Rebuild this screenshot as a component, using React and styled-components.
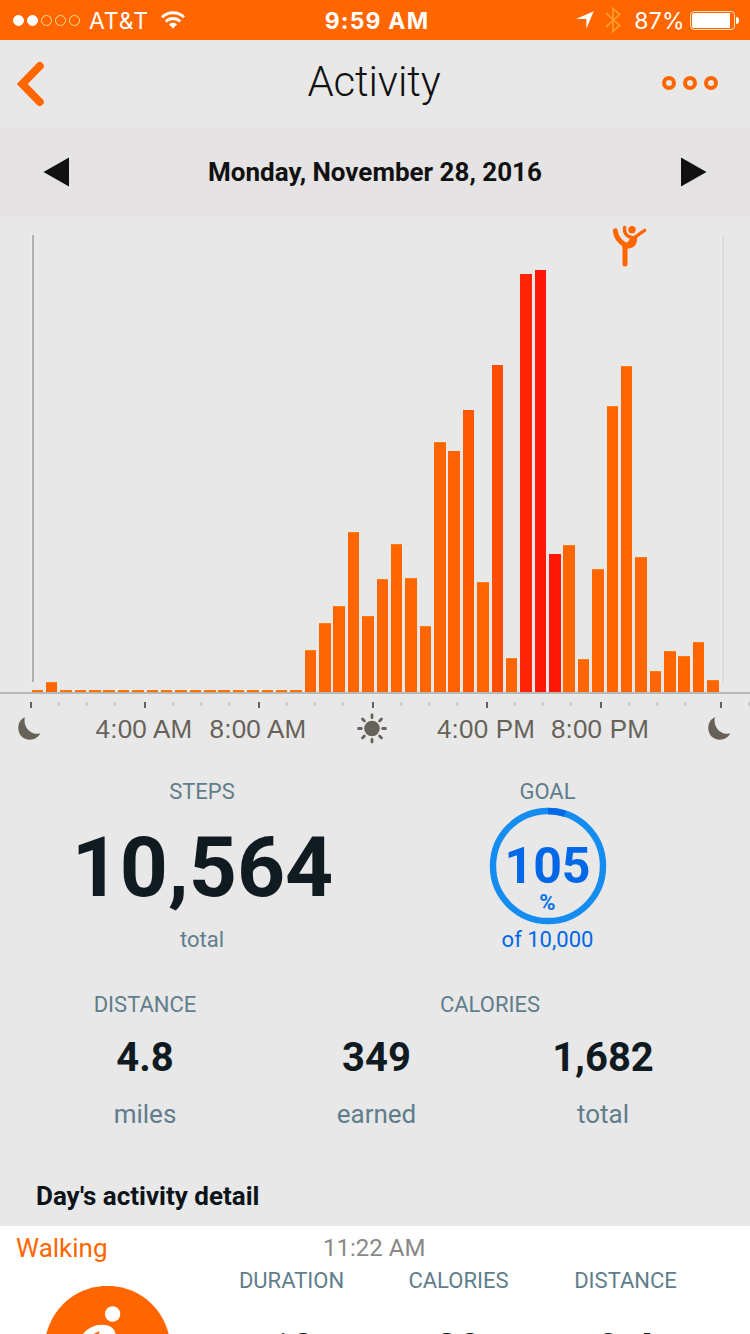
import React from 'react';
import styled, { createGlobalStyle } from 'styled-components';

const orange = '#ff6600';

const bars = [
  2, 10, 2, 2, 2, 2, 2, 2, 2, 2, 2, 2, 2, 2, 2, 2, 2, 2, 2, 42, 69, 86, 160, 76,
  113, 148, 114, 66, 250, 241, 282, 110, 327, 34, 418, 422, 138, 147, 33, 123, 286, 326, 135, 21,
  41, 36, 50, 12,
];

const barColors = {
  29: '#ff6103',
  30: '#ff5900',
  32: '#ff4e00',
  34: '#ff2406',
  35: '#ff1807',
  36: '#ff1807',
};

const tickGroups = [114, 114, 114, 114, 114, 120];

const Moon = () => (
  <svg width="24" height="24" viewBox="0 0 24 24">
    <path d="M6.900.3C2.800 2 .3 6 .3 11 .3 17.800 5.300 22.700 11.800 22.700 16.500 22.700 20.400 20.200 22.300 16.300 18.900 17.300 15.300 16.900 12 14.500 7.700 11.400 5.700 6 6.900.3Z" fill="#666259" />
  </svg>
);

const Sun = () => (
  <svg width="30" height="32" viewBox="0 0 30 32">
    <circle cx="15" cy="15.500" r="7.800" fill="#666259" />
    <g stroke="#666259" strokeWidth="2.800" strokeLinecap="round">
      <path d="M15 1.900v2.800M15 26.300v2.800M1.500 15.500h2.800M25.700 15.500h2.800M5.500 6l1.900 1.900M22.600 23.100l1.900 1.900M5.500 25l1.900-1.900M22.600 7.900l1.900-1.900" />
    </g>
  </svg>
);

const Dancer = () => (
  <svg width="36" height="44" viewBox="96 28 108 132" fill="none" stroke={orange} strokeLinecap="round">
    <circle cx="156" cy="45" r="11" fill={orange} stroke="none" />
    <path d="M106 48C107 63 117 80 135 91V148" strokeWidth="15" strokeLinejoin="round" />
    <path d="M134 38C131 54 140 67 157 69" strokeWidth="10" />
    <path d="M194 47L164 68" strokeWidth="10" />
    <path d="M126 82C140 88 148 80 150 69L170 62C175 84 166 102 142 102L128 99Z" fill={orange} stroke="none" />
  </svg>
);

export default function App() {
  return (
    <Screen>
      <GlobalStyle />
      <StatusBar>
        <StatusLeft>
          <Signal>
            <SignalDot $on />
            <SignalDot $on />
            <SignalDot />
            <SignalDot />
            <SignalDot />
          </Signal>
          <Carrier>AT&amp;T</Carrier>
          <svg width="24" height="18" viewBox="0 0 24 18" fill="none" stroke="#fff" strokeWidth="2.800">
            <path d="M1 6.300C7.200.2 16.800.2 23 6.300" />
            <path d="M4.800 10.500C8.900 6.500 15.100 6.500 19.200 10.500" />
            <path d="M12 17.500L7.900 13.300C10.200 11.200 13.800 11.200 16.100 13.300Z" fill="#fff" stroke="none" />
          </svg>
        </StatusLeft>
        <Clock>9:59 AM</Clock>
        <StatusRight>
          <svg width="18" height="18" viewBox="0 0 18 18">
            <path d="M17.700.2L10.400 17.800V8H0Z" fill="#fff" />
          </svg>
          <Bluetooth width="16" height="28" viewBox="0 0 16 28">
            <path d="M1 6.800L14.500 19.500 8 25.500V2.500L14.500 8.300 1 21" fill="none" stroke="#ff9a2b" strokeWidth="1.800" />
          </Bluetooth>
          <Percent>87%</Percent>
          <Battery>
            <BatteryBody>
              <BatteryLevel />
            </BatteryBody>
            <BatteryCap />
          </Battery>
        </StatusRight>
      </StatusBar>

      <Header>
        <svg width="28" height="46" viewBox="0 0 28 46">
          <path d="M22.800 5L5.200 23 22.800 41" fill="none" stroke={orange} strokeWidth="7.900" strokeLinecap="round" />
        </svg>
        <Title>Activity</Title>
        <More>
          <MoreDot />
          <MoreDot />
          <MoreDot />
        </More>
      </Header>

      <DateBar>
        <svg width="26" height="30" viewBox="0 0 26 30">
          <path d="M26 .5V29.500L.5 15Z" fill="#111" />
        </svg>
        <DateText>Monday, November 28, 2016</DateText>
        <svg width="26" height="30" viewBox="0 0 26 30">
          <path d="M0 .5V29.500L25.500 15Z" fill="#111" />
        </svg>
      </DateBar>

      <Chart>
        <Bars>
          {bars.map((height, i) => (
            <Bar key={i} $color={barColors[i]} style={{ height }} />
          ))}
        </Bars>
        <MidnightLine $left={30} $color="#b0b0b0" />
        <MidnightLine $left={720} $color="#dcdcdc" />
        <Marker>
          <Dancer />
        </Marker>
      </Chart>

      <Ticks>
        {tickGroups.map((width, i) => (
          <TickGroup key={i} $width={width}>
            <Tick $major />
            <Tick />
            <Tick />
            <Tick />
          </TickGroup>
        ))}
        <TickGroup $width={30}>
          <Tick $major />
          <Tick />
        </TickGroup>
      </Ticks>

      <Hours>
        <Hour $width={60}><Moon /></Hour>
        <Hour $width={168}>4:00 AM</Hour>
        <Hour $width={60}>8:00 AM</Hour>
        <Hour $width={168}><Sun /></Hour>
        <Hour $width={60}>4:00 PM</Hour>
        <Hour $width={168}>8:00 PM</Hour>
        <Hour $width={72}><Moon /></Hour>
      </Hours>

      <Totals>
        <Steps>
          <Label>STEPS</Label>
          <StepCount>10,564</StepCount>
          <Label>total</Label>
        </Steps>
        <Goal>
          <Label>GOAL</Label>
          <Ring>
            <RingArc width="118" height="118" viewBox="-59 -59 118 118" fill="none" strokeWidth="6.400">
              <circle r="55" stroke="#158cf0" />
              <path d="M0-55A55 55 0 0 1 17-52.300" stroke="#0068e6" />
            </RingArc>
            <GoalValue>105</GoalValue>
            <GoalUnit>%</GoalUnit>
          </Ring>
          <Label $blue>of 10,000</Label>
        </Goal>
      </Totals>

      <Summary>
        <Metric $width={290}>
          <Label>DISTANCE</Label>
          <Value>4.8</Value>
          <Unit>miles</Unit>
        </Metric>
        <Calories>
          <Label>CALORIES</Label>
          <CalorieRow>
            <Metric $width={173}>
              <Value>349</Value>
              <Unit>earned</Unit>
            </Metric>
            <Metric $width={280}>
              <Value>1,682</Value>
              <Unit>total</Unit>
            </Metric>
          </CalorieRow>
        </Calories>
      </Summary>

      <DetailTitle>Day's activity detail</DetailTitle>

      <Detail>
        <DetailHead>
          <Kind>Walking</Kind>
          <Time>11:22 AM</Time>
        </DetailHead>
        <DetailBody>
          <svg width="126" height="126" viewBox="0 0 126 126">
            <circle cx="62.500" cy="62.700" r="62.900" fill={orange} />
            <circle cx="67.600" cy="28" r="7.700" fill="#fff" />
            <path d="M36 50C42 43 48 38.800 57 38.800C66 38.800 70 43 71 50L66 80H30Z" fill="#fff" />
            <path d="M44 54L46.500 49L54.500 45L52 54Z" fill={orange} />
          </svg>
          <DetailStats>
            <DetailStat>
              <Label>DURATION</Label>
              <DetailValue>18</DetailValue>
            </DetailStat>
            <DetailStat>
              <Label>CALORIES</Label>
              <DetailValue>38</DetailValue>
            </DetailStat>
            <DetailStat>
              <Label>DISTANCE</Label>
              <DetailValue>0.4</DetailValue>
            </DetailStat>
          </DetailStats>
        </DetailBody>
      </Detail>
    </Screen>
  );
}

const GlobalStyle = createGlobalStyle`
  * {
    box-sizing: border-box;
  }

  body {
    margin: 0;
    background: #e8e8e8;
    overflow: hidden;
  }

  svg {
    display: block;
    flex-shrink: 0;
  }
`;

const Screen = styled.div`
  display: flex;
  flex-direction: column;
  width: 750px;
  height: 1334px;
  overflow: hidden;
  background: #e8e8e8;
  font-family: Roboto, sans-serif;
  white-space: nowrap;

  > * {
    flex-shrink: 0;
  }
`;

const StatusBar = styled.div`
  display: grid;
  grid-template-columns: 1fr auto 1fr;
  align-items: center;
  height: 40px;
  padding: 0 11px 0 13px;
  background: ${orange};
  color: #fff;
  font: 400 23px/38px Inter, sans-serif;
`;

const StatusLeft = styled.div`
  display: flex;
  align-items: center;
`;

const Signal = styled.div`
  display: flex;
  gap: 3px;
`;

const SignalDot = styled.span`
  width: 11px;
  height: 11px;
  border-radius: 50%;
  border: 1px solid ${({ $on }) => ($on ? '#fff' : '#ffd9a0')};
  background: ${({ $on }) => ($on ? '#fff' : 'none')};
`;

const Carrier = styled.span`
  width: 60px;
  margin: 0 12px 0 9px;
  padding-top: 2px;
  letter-spacing: 0.9px;
`;

const Clock = styled.span`
  padding: 2px 0 0 2px;
  font-weight: 700;
  letter-spacing: 1.2px;
`;

const StatusRight = styled.div`
  display: flex;
  align-items: center;
  justify-content: flex-end;
`;

const Bluetooth = styled.svg`
  margin: 0 13px 0 11px;
`;

const Percent = styled.span`
  margin-right: 5px;
  padding-top: 2px;
  letter-spacing: 0.3px;
`;

const Battery = styled.div`
  display: flex;
  align-items: center;
  gap: 1px;
`;

const BatteryBody = styled.div`
  width: 45px;
  height: 19px;
  padding: 1px;
  border: 1px solid #ffe0b8;
  border-radius: 4px;
`;

const BatteryLevel = styled.div`
  width: 38px;
  height: 15px;
  border-radius: 2px 0 0 2px;
  background: #fff;
`;

const BatteryCap = styled.div`
  width: 3px;
  height: 7px;
  border-radius: 0 3px 3px 0;
  background: #fff;
`;

const Header = styled.div`
  display: flex;
  align-items: center;
  justify-content: space-between;
  height: 88px;
  padding: 0 32px 0 17px;
`;

const Title = styled.h1`
  margin: 0 0 5px 41px;
  color: #111;
  font-size: 42px;
  font-weight: 300;
  letter-spacing: -0.1px;
`;

const More = styled.div`
  display: flex;
  gap: 7px;
  padding-bottom: 2px;
`;

const MoreDot = styled.span`
  width: 14px;
  height: 14px;
  border: 4px solid ${orange};
  border-radius: 50%;
`;

const DateBar = styled.div`
  display: flex;
  align-items: center;
  justify-content: space-between;
  height: 88px;
  padding: 0 43px;
  background: #e5e3e4;
`;

const DateText = styled.span`
  color: #111;
  font-size: 26px;
  font-weight: 700;
`;

const Chart = styled.div`
  position: relative;
  height: 478px;
  border-bottom: 2px solid #b8b8b8;
`;

const Bars = styled.div`
  display: flex;
  align-items: flex-end;
  gap: 2.875px;
  height: 100%;
  padding-left: 31.52px;
`;

const Bar = styled.div`
  flex: none;
  width: 11.5px;
  border-top: 1px solid ${({ $color }) => $color || '#ff7d0a'};
  background: ${({ $color }) => $color || orange};
`;

const MidnightLine = styled.div`
  position: absolute;
  top: 19px;
  left: ${({ $left }) => $left}px;
  width: 4px;
  height: 447px;
  border-left: 2px solid #ececec;
  border-right: 2px solid ${({ $color }) => $color};
`;

const Marker = styled.div`
  position: absolute;
  top: 8px;
  left: 612px;
`;

const Ticks = styled.div`
  display: flex;
  height: 15px;
  padding: 8px 0 0 30px;
  overflow: hidden;
`;

const TickGroup = styled.div`
  display: flex;
  flex: none;
  gap: 26px;
  width: ${({ $width }) => $width}px;
`;

const Tick = styled.span`
  flex: none;
  width: 2px;
  height: ${({ $major }) => ($major ? 6 : 4)}px;
  background: ${({ $major }) => ($major ? '#666259' : '#cbcbcb')};
`;

const Hours = styled.div`
  display: flex;
  height: 40px;
`;

const Hour = styled.div`
  display: flex;
  flex: none;
  align-items: center;
  justify-content: center;
  width: ${({ $width }) => $width}px;
  color: #666259;
  font: 26px/40px 'Liberation Sans', sans-serif;
  letter-spacing: 0.2px;
`;

const Totals = styled.div`
  display: flex;
  height: 214px;
  padding-top: 29px;
`;

const Steps = styled.div`
  display: flex;
  flex-direction: column;
  align-items: center;
  width: 404px;
`;

const Goal = styled.div`
  display: flex;
  flex-direction: column;
  align-items: center;
  width: 287px;
`;

const Label = styled.span`
  color: ${({ $blue }) => ($blue ? '#0068e6' : '#607d8b')};
  font-size: 22px;
  line-height: 28px;
`;

const StepCount = styled.strong`
  height: 120px;
  padding-left: 1px;
  color: #101a21;
  font-size: 84px;
  line-height: 123px;
`;

const Ring = styled.div`
  position: relative;
  display: flex;
  flex-direction: column;
  align-items: center;
  height: 120px;
  padding-top: 37px;
  color: #0068e6;
`;

const RingArc = styled.svg`
  position: absolute;
  top: 1px;
  left: calc(50% - 59px);
`;

const GoalValue = styled.strong`
  font-size: 50px;
  line-height: 46px;
`;

const GoalUnit = styled.strong`
  font-size: 22px;
  line-height: 28px;
  color: #0b74e8;
`;

const Summary = styled.div`
  display: flex;
  height: 203px;
  padding-top: 28px;
`;

const Metric = styled.div`
  display: flex;
  flex-direction: column;
  align-items: center;
  width: ${({ $width }) => $width}px;
`;

const Calories = styled.div`
  display: flex;
  flex-direction: column;
  align-items: center;
  width: 400px;
`;

const CalorieRow = styled.div`
  display: flex;
  align-self: flex-start;
`;

const Value = styled.strong`
  color: #101a21;
  font-size: 40px;
  line-height: 77px;
`;

const Unit = styled.span`
  color: #607d8b;
  font-size: 26px;
  line-height: 36px;
`;

const DetailTitle = styled.h2`
  height: 60px;
  margin: 0;
  padding-left: 36px;
  color: #0c1419;
  font-size: 26px;
  line-height: 60px;
`;

const Detail = styled.div`
  height: 108px;
  overflow: hidden;
  background: #fff;
`;

const DetailHead = styled.div`
  display: flex;
  align-items: center;
  height: 41px;
  padding: 3px 0 0 16px;
`;

const Kind = styled.span`
  width: 307px;
  color: ${orange};
  font-size: 26px;
`;

const Time = styled.span`
  color: #888;
  font-size: 24px;
`;

const DetailBody = styled.div`
  display: flex;
  padding-left: 45px;

  > svg {
    margin-top: 19px;
  }
`;

const DetailStats = styled.div`
  display: flex;
  padding-left: 37px;
`;

const DetailStat = styled.div`
  display: flex;
  flex-direction: column;
  align-items: center;
  width: 167px;
`;

const DetailValue = styled.strong`
  margin-top: 30px;
  color: #101a21;
  font-size: 40px;
  line-height: 48px;
`;
